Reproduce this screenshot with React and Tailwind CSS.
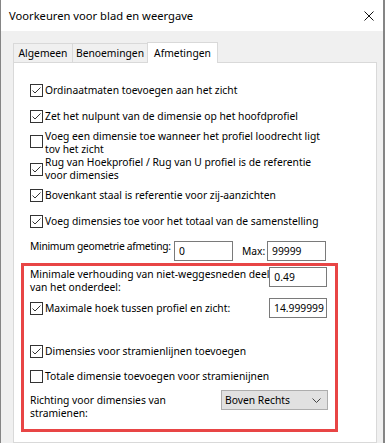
import React from "react";

function Check({ checked, className = "" }) {
  return (
    <span
      className={`w-[13px] h-[13px] border border-[#333333] bg-white shrink-0 flex items-center justify-center ${className}`}
    >
      {checked && (
        <svg width="11" height="11" viewBox="0 0 11 11">
          <polyline points="1.5,5.5 4,8 9.5,2.5" fill="none" stroke="#333333" strokeWidth="1" />
        </svg>
      )}
    </span>
  );
}

function Input({ value, w = "w-[58px]" }) {
  return (
    <div
      className={`${w} h-[20px] shrink-0 border border-[#7a7a7a] bg-white pl-[4px] leading-[18px] overflow-hidden whitespace-nowrap`}
    >
      {value}
    </div>
  );
}

export default function App() {
  return (
    <div className="w-[385px] h-[443px] overflow-hidden bg-[#f0f0f0] border-l border-r-2 border-[#858585] font-['Noto_Sans',sans-serif] text-[10.3px] text-black flex flex-col whitespace-nowrap">
      {/* Title bar */}
      <div className="h-[31px] shrink-0 bg-white flex items-center justify-between pl-[8px] pr-[9px]">
        <span className="leading-[16px] text-[11.2px]">Voorkeuren voor blad en weergave</span>
        <svg width="10" height="10" viewBox="0 0 10 10">
          <path d="M0.5 0.5 L9.5 9.5 M9.5 0.5 L0.5 9.5" stroke="#111" strokeWidth="1" fill="none" />
        </svg>
      </div>

      {/* Body */}
      <div className="flex-1 flex flex-col pt-[11px] pl-[12px] pr-[6px]">
        {/* Tabs */}
        <div className="flex items-end h-[21px] -mb-px relative z-10">
          <div className="w-[60px] h-[20px] border border-[#d9d9d9] bg-[#f0f0f0] flex items-center justify-center leading-[16px]">
            Algemeen
          </div>
          <div className="w-[75px] h-[20px] border border-l-0 border-[#d9d9d9] bg-[#f0f0f0] flex items-center justify-center leading-[16px]">
            Benoemingen
          </div>
          <div className="w-[71px] h-[21px] -ml-px border border-b-0 border-[#d9d9d9] bg-white flex items-center justify-center leading-[16px] pb-[1px]">
            Afmetingen
          </div>
        </div>

        {/* Panel */}
        <div className="flex-1 border border-[#d9d9d9] bg-white pl-[16px] flex flex-col">
          <div className="flex items-center h-[16px] mt-[19px]">
            <Check checked />
            <span className="ml-[2px] leading-[16px]">Ordinaatmaten toevoegen aan het zicht</span>
          </div>
          <div className="flex items-center h-[16px] mt-[10px]">
            <Check checked />
            <span className="ml-[2px] leading-[16px]">Zet het nulpunt van de dimensie op het hoofdprofiel</span>
          </div>
          <div className="flex items-center mt-[6px]">
            <Check className="mb-[3px]" />
            <span className="ml-[2px] leading-[13px]">
              Voeg een dimensie toe wanneer het profiel loodrecht ligt
              <br />
              tov het zicht
            </span>
          </div>
          <div className="flex items-center">
            <Check checked />
            <span className="ml-[2px] leading-[13px]">
              Rug van Hoekprofiel / Rug van U profiel is de referentie
              <br />
              voor dimensies
            </span>
          </div>
          <div className="flex items-center h-[16px] mt-[5px]">
            <Check checked />
            <span className="ml-[2px] leading-[16px]">Bovenkant staal is referentie voor zij-aanzichten</span>
          </div>
          <div className="flex items-center h-[16px] mt-[10px]">
            <Check checked />
            <span className="ml-[2px] leading-[16px]">Voeg dimensies toe voor het totaal van de samenstelling</span>
          </div>
          <div className="flex items-start h-[20px] mt-[12px]">
            <span className="w-[144px] shrink-0 leading-[16px] -mt-[3px] tracking-[-0.3px]">Minimum geometrie afmeting:</span>
            <Input value="0" w="w-[59px]" />
            <span className="w-[25px] ml-[9px] shrink-0 leading-[16px] mt-[2px]">Max:</span>
            <Input value="99999" w="w-[59px]" />
          </div>

          {/* Highlighted group */}
          <div className="w-[317px] h-[169px] mt-[2px] -ml-[9px] border-[3px] border-[#e84545] pl-[6px] pr-[8px] flex flex-col">
            <div className="flex items-start justify-between mt-[1px]">
              <span className="leading-[13px] mt-[1px]">
                Minimale verhouding van niet-weggesneden deel
                <br />
                van het onderdeel:
              </span>
              <Input value="0.49" />
            </div>
            <div className="flex items-center justify-between h-[20px] mt-[4px]">
              <div className="flex items-center">
                <Check checked />
                <span className="ml-[2px] leading-[16px]">Maximale hoek tussen profiel en zicht:</span>
              </div>
              <Input value="14.999999" />
            </div>
            <div className="flex items-center h-[16px] mt-[25px]">
              <Check checked />
              <span className="ml-[2px] leading-[16px]">Dimensies voor stramienlijnen toevoegen</span>
            </div>
            <div className="flex items-center h-[16px] mt-[9px]">
              <Check />
              <span className="ml-[2px] leading-[16px]">Totale dimensie toevoegen voor stramienijnen</span>
            </div>
            <div className="flex items-start justify-between mt-[6px]">
              <span className="leading-[13px] mt-[4px]">
                Richting voor dimensies van
                <br />
                stramienen:
              </span>
              <div className="w-[107px] h-[20px] -mr-px border border-[#adadad] bg-[#e1e1e1] pl-[3px] pr-[6px] flex items-center justify-between">
                <span className="leading-[16px]">Boven Rechts</span>
                <svg width="9" height="5" viewBox="0 0 9 5">
                  <polyline points="0.5,0.5 4.5,4.5 8.5,0.5" fill="none" stroke="#444" strokeWidth="1" />
                </svg>
              </div>
            </div>
          </div>
        </div>
      </div>
    </div>
  );
}
